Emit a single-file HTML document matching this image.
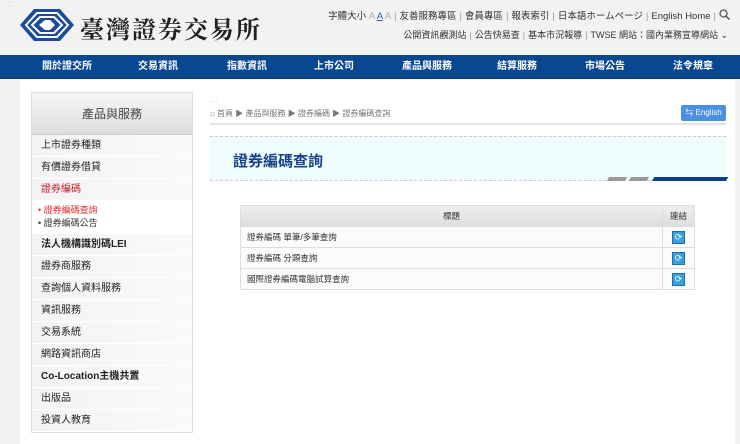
<!DOCTYPE html>
<html><head><meta charset="utf-8"><style>
*{margin:0;padding:0;box-sizing:border-box}
body{width:740px;height:444px;overflow:hidden;background:#f2f2f2;font-family:"Liberation Sans","Noto Sans CJK TC",sans-serif;position:relative;color:#333}
.a{position:absolute}
.top1{top:8px;right:10px;font-size:9.5px;color:#333;white-space:nowrap}
.top2{top:28px;right:12px;font-size:9px;color:#333;white-space:nowrap}
.sep{color:#999;margin:0 3px}
.nav{top:55px;left:0;width:740px;height:24px;background:#0a4791;border-bottom:1px solid #063a78}
.nav div{position:absolute;top:0;width:90px;text-align:center;color:#fff;font-size:10px;font-weight:bold;line-height:24px}
.main{top:80px;left:20px;width:715px;height:364px;background:#fff}
.side{left:31px;top:92px;width:162px;border:1px solid #ddd;background:#fff}
.sh{height:42px;background:linear-gradient(#f7f7f7,#dcdcdc);text-align:center;line-height:42px;font-size:12px;color:#444;border-bottom:1px solid #ccc}
.it{height:22px;line-height:22px;padding-left:9px;font-size:10px;color:#222;background:linear-gradient(90deg,#f3f3f3,#fafafa);border-bottom:1px solid #fff}
.sub{padding:3px 0 4px 6px;font-size:9px;line-height:13px;color:#333}
table{border-collapse:collapse;font-size:8.5px}
td{border:1px solid #ddd;height:21px;padding-left:6px}
.ic{display:inline-block;width:13px;height:13px;background:#3aa0dc;border:1px solid #1a6fb0;color:#fff;font-size:9px;line-height:11px;vertical-align:middle}
.dots{font-size:5px;color:#999;line-height:4px;letter-spacing:1px}
</style></head><body>
<div class="a dots" style="left:5px;top:1px">···<br>···</div>
<svg class="a" style="left:20px;top:9px" width="54" height="32" viewBox="0 0 54 32">
<polygon points="0,16 14,0 40,0 54,16 40,32 14,32" fill="#1b4b9c"/>
<polygon points="6,16 17,4 37,4 48,16 37,28 17,28" fill="none" stroke="#fff" stroke-width="2"/>
<polygon points="12,16 20,8 34,8 42,16 34,24 20,24" fill="none" stroke="#fff" stroke-width="2"/>
<polygon points="19,16 25,11 30,11 35,16 30,21 25,21" fill="#fff"/>
</svg>
<div class="a" style="left:80px;top:10px;font-size:24px;font-family:'Noto Serif CJK SC',serif;font-weight:bold;color:#222;letter-spacing:2px">臺灣證券交易所</div>
<div class="a top1">字體大小 <span style="color:#aaa">A</span> <span style="color:#2a5fb0;text-decoration:underline">A</span> <span style="color:#aaa">A</span><span class="sep">|</span>友善服務專區<span class="sep">|</span>會員專區<span class="sep">|</span>報表索引<span class="sep">|</span>日本語ホームページ<span class="sep">|</span>English Home<span class="sep">|</span><svg width="11" height="11" viewBox="0 0 11 11" style="vertical-align:-1px"><circle cx="4.5" cy="4.5" r="3.5" fill="none" stroke="#555" stroke-width="1.3"/><line x1="7" y1="7" x2="10.5" y2="10.5" stroke="#555" stroke-width="1.5"/></svg></div>
<div class="a top2">公開資訊觀測站<span class="sep">|</span>公告快易查<span class="sep">|</span>基本市況報導<span class="sep">|</span>TWSE 網站：國內業務宣導網站 ⌄</div>
<div class="a nav"><div style="left:22px">關於證交所</div><div style="left:113px">交易資訊</div><div style="left:202px">指數資訊</div><div style="left:289px">上市公司</div><div style="left:382px">產品與服務</div><div style="left:472px">結算服務</div><div style="left:560px">市場公告</div><div style="left:648px">法令規章</div></div>
<div class="a main"></div>
<div class="a side">
<div class="sh">產品與服務</div>
<div class="it">上市證券種類</div>
<div class="it">有價證券借貸</div>
<div class="it" style="color:#c0242b">證券編碼</div>
<div class="sub"><div style="color:#e02a2a">• 證券編碼查詢</div><div>• 證券編碼公告</div></div>
<div class="it" style="font-weight:bold">法人機構識別碼LEI</div>
<div class="it">證券商服務</div>
<div class="it">查詢個人資料服務</div>
<div class="it">資訊服務</div>
<div class="it">交易系統</div>
<div class="it">網路資訊商店</div>
<div class="it" style="font-weight:bold">Co-Location主機共置</div>
<div class="it">出版品</div>
<div class="it">投資人教育</div>
</div>
<div class="a dots" style="left:210px;top:96px">···<br>···</div>
<div class="a" style="left:210px;top:108px;font-size:8px;color:#777">&#8962; 首頁 ▶ 產品與服務 ▶ 證券編碼 ▶ 證券編碼查詢</div>
<div class="a" style="left:681px;top:105px;width:45px;height:16px;background:#4a90e2;border-radius:2px;color:#fff;font-size:8px;line-height:16px;text-align:center">⇆ English</div>
<div class="a" style="left:210px;top:123px;width:516px;height:2px;background:#e4e4e4"></div>
<div class="a" style="left:210px;top:136px;width:516px;height:45px;background:#effcfd;border-top:1px dashed #ccc;border-bottom:1px dashed #ccc"></div>
<div class="a" style="left:233px;top:150px;font-size:15px;font-weight:bold;color:#17418a">證券編碼查詢</div>
<div class="a" style="left:608px;top:177px;width:18px;height:4px;background:#999;transform:skewX(-30deg)"></div>
<div class="a" style="left:630px;top:177px;width:18px;height:4px;background:#999;transform:skewX(-30deg)"></div>
<div class="a" style="left:652px;top:177px;width:74px;height:4px;background:#0a3f85;transform:skewX(-30deg);transform-origin:bottom"></div>
<table class="a" style="left:240px;top:205px;width:455px">
<tr style="background:linear-gradient(#eee,#ddd)"><td style="text-align:center;padding:0">標題</td><td style="width:32px;text-align:center;padding:0">連結</td></tr>
<tr style="background:#fbfbfb"><td>證券編碼 單筆/多筆查詢</td><td style="text-align:center;padding:0"><span class="ic">⟳</span></td></tr>
<tr style="background:#fbfbfb"><td>證券編碼 分類查詢</td><td style="text-align:center;padding:0"><span class="ic">⟳</span></td></tr>
<tr style="background:#fbfbfb"><td>國際證券編碼電腦試算查詢</td><td style="text-align:center;padding:0"><span class="ic">⟳</span></td></tr>
</table>
</body></html>
